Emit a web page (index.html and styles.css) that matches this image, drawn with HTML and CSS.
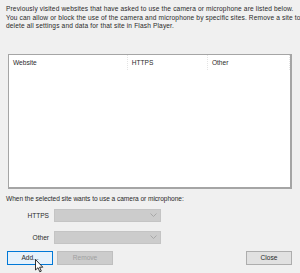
FILE: index.html
```html
<!DOCTYPE html>
<html lang="en">
<head>
  <meta charset="UTF-8">
  <title>Camera and Microphone Settings</title>
  <link rel="stylesheet" href="styles.css">
</head>
<body>
  <div class="dialog">
    <p class="intro">Previously visited websites that have asked to use the camera or microphone are listed below.<br>You can allow or block the use of the camera and microphone by specific sites. Remove a site to<br>delete all settings and data for that site in Flash Player.</p>

    <div class="site-list">
      <div class="list-head">
        <span class="col col-site">Website</span>
        <span class="col col-https">HTTPS</span>
        <span class="col col-other">Other</span>
      </div>
    </div>

    <p class="when">When the selected site wants to use a camera or microphone:</p>

    <div class="field">
      <label>HTTPS</label>
      <div class="combo"><svg width="7" height="4" viewBox="0 0 7 4"><path d="M0.5 0.5 L3.5 3.5 L6.5 0.5" fill="none" stroke="#a8a8a8" stroke-width="1"/></svg></div>
    </div>
    <div class="field">
      <label>Other</label>
      <div class="combo"><svg width="7" height="4" viewBox="0 0 7 4"><path d="M0.5 0.5 L3.5 3.5 L6.5 0.5" fill="none" stroke="#a8a8a8" stroke-width="1"/></svg></div>
    </div>

    <div class="buttons">
      <button class="btn btn-focus">Add...</button>
      <button class="btn btn-disabled">Remove</button>
      <button class="btn btn-close">Close</button>
    </div>
  </div>

  <!-- mouse pointer over the Add button -->
  <svg class="cursor" width="9" height="14" viewBox="0 0 9 14">
    <path d="M0.5 0.5 L0.5 11 L3 8.7 L4.8 12.8 L6.3 12.1 L4.6 8.2 L7.8 8.2 Z" fill="#fff" stroke="#000" stroke-width="0.8"/>
  </svg>
</body>
</html>
```

FILE: styles.css
```css
body {
  margin: 0;
  background-color: #f0f0f0;
  font-family: 'Liberation Sans', Arial, sans-serif;
  font-size: 6.6px;
  color: #2a2a2a;
}

.dialog {
  display: flex;
  flex-direction: column;
  padding: 5px 8px 0 6px;
}

.intro {
  margin: 0;
  line-height: 8.5px;
  white-space: nowrap;
  letter-spacing: 0.14px;
}

.site-list {
  margin: 23px 0 0 2px;
  height: 132px;
  background-color: white;
  border: 1px solid #a5a5a5;
  border-right-width: 2px;
  border-bottom-width: 2px;
}

.list-head {
  display: flex;
  height: 15px;
  align-items: center;
}

.col {
  height: 100%;
  display: flex;
  align-items: center;
  padding-left: 4px;
  border-right: 1px dotted #e4e4e4;
}

.col-site {
  width: 115px;
}

.col-https {
  width: 76px;
}

.col-other {
  width: 78px;
}

.when {
  margin: 6px 0 0 0;
  line-height: 8px;
  letter-spacing: -0.05px;
}

.field {
  display: flex;
  align-items: center;
  margin-top: 6px;
}

.field + .field {
  margin-top: 9px;
}

.field label {
  width: 43px;
  text-align: right;
  margin-right: 5px;
}

.combo {
  width: 102px;
  height: 11px;
  background-color: #cccccc;
  border: 1px solid #c4c4c4;
  display: flex;
  align-items: center;
  justify-content: flex-end;
  padding-right: 3px;
  box-sizing: content-box;
}

.buttons {
  display: flex;
  gap: 4px;
  margin-top: 7px;
  margin-left: 1px;
}

.btn {
  font-family: 'Liberation Sans', Arial, sans-serif;
  font-size: 6.6px;
  width: 46px;
  height: 14px;
  padding: 0;
  border: 1px solid #adadad;
  background-color: #e1e1e1;
  color: #2a2a2a;
}

.btn-focus {
  border-color: #0078d7;
  background-color: #e5f1fb;
}

.btn-disabled {
  width: 56px;
  border-color: #bfbfbf;
  background-color: #cccccc;
  color: #a0a0a0;
}

.btn-close {
  margin-left: auto;
}

.cursor {
  position: absolute;
  left: 35px;
  top: 259px;
}
```
